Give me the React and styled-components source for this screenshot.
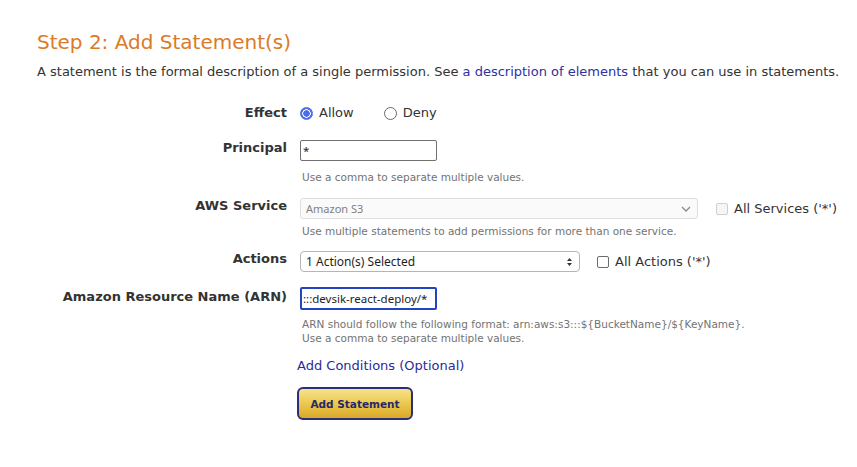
import React from 'react'
import styled, { createGlobalStyle } from 'styled-components'

const GlobalStyle = createGlobalStyle`
  html, body {
    margin: 0;
    padding: 0;
    background: #ffffff;
  }
  body {
    font-family: "DejaVu Sans", Verdana, sans-serif;
    color: #333333;
  }
`;

const App = () => {
  return (
    <>
      <GlobalStyle />
      <Page>
        <Title>Step 2: Add Statement(s)</Title>
        <Intro>
          A statement is the formal description of a single permission. See{' '}
          <InlineLink href="#">a description of elements</InlineLink> that you can use in statements.
        </Intro>

        <Form>
          <Row $top={25}>
            <Label>Effect</Label>
            <Field>
              <RadioGroup>
                <RadioLabel>
                  <Radio type="radio" name="effect" defaultChecked />
                  Allow
                </RadioLabel>
                <RadioLabel>
                  <Radio type="radio" name="effect" />
                  Deny
                </RadioLabel>
              </RadioGroup>
            </Field>
          </Row>

          <Row $top={19}>
            <Label>Principal</Label>
            <Field>
              <TextInput defaultValue="*" />
              <Help $top={9}>Use a comma to separate multiple values.</Help>
            </Field>
          </Row>

          <Row $top={14}>
            <Label>AWS Service</Label>
            <Field>
              <Inline $gap={18}>
                <SelectWrap $width={398}>
                  <Select disabled $disabled>
                    <option>Amazon S3</option>
                  </Select>
                  <Chevron width="10" height="6" viewBox="0 0 10 6">
                    <path d="M1 1l4 4 4-4" fill="none" stroke="#8a8a8a" strokeWidth="1.3" />
                  </Chevron>
                </SelectWrap>
                <CheckLabel $disabled>
                  <Checkbox type="checkbox" disabled $disabled />
                  All Services ('*')
                </CheckLabel>
              </Inline>
              <Help $top={5}>Use multiple statements to add permissions for more than one service.</Help>
            </Field>
          </Row>

          <Row $top={13}>
            <Label>Actions</Label>
            <Field>
              <Inline $gap={17}>
                <SelectWrap $width={280}>
                  <Select>
                    <option>1 Action(s) Selected</option>
                  </Select>
                  <Chevron width="7" height="10" viewBox="0 0 7 10">
                    <path d="M1 4l2.5-3 2.5 3z M1 6l2.5 3 2.5-3z" fill="#333" />
                  </Chevron>
                </SelectWrap>
                <CheckLabel>
                  <Checkbox type="checkbox" />
                  All Actions ('*')
                </CheckLabel>
              </Inline>
            </Field>
          </Row>

          <Row $top={15}>
            <Label $offset={2}>Amazon Resource Name (ARN)</Label>
            <Field>
              <TextInput $focused defaultValue=":::devsik-react-deploy/*" />
              <Help $top={7}>
                ARN should follow the following format: arn:aws:s3:::${'{'}BucketName{'}'}/${'{'}KeyName{'}'}.
                <br />
                Use a comma to separate multiple values.
              </Help>
            </Field>
          </Row>

          <Row $top={13}>
            <span />
            <Field>
              <ConditionsLink href="#">Add Conditions (Optional)</ConditionsLink>
              <AddButton type="button">Add Statement</AddButton>
            </Field>
          </Row>
        </Form>
      </Page>
    </>
  )
}

export default App

const Page = styled.div`
  padding: 28px 0 40px 37px;
  width: 857px;
  box-sizing: border-box;
`;

const Title = styled.h2`
  margin: 0;
  font-weight: normal;
  font-size: 20px;
  line-height: 28px;
  color: #dc7a26;
`;

const Intro = styled.p`
  margin: 8px 0 0;
  font-size: 13px;
  line-height: 16px;
  color: #333333;
  white-space: nowrap;
`;

const InlineLink = styled.a`
  color: #2f2fa3;
  text-decoration: none;
`;

const Form = styled.div`
  display: flex;
  flex-direction: column;
`;

const Row = styled.div`
  display: grid;
  grid-template-columns: 250px 1fr;
  column-gap: 13px;
  align-items: start;
  margin-top: ${(p) => p.$top || 0}px;
`;

const Label = styled.div`
  text-align: right;
  font-weight: bold;
  font-size: 13px;
  line-height: 16px;
  color: #333333;
  padding-top: ${(p) => p.$offset || 0}px;
  white-space: nowrap;
`;

const Field = styled.div`
  display: flex;
  flex-direction: column;
  align-items: flex-start;
`;

const RadioGroup = styled.div`
  display: flex;
  gap: 30px;
`;

const RadioLabel = styled.label`
  display: flex;
  align-items: center;
  gap: 6px;
  font-size: 13px;
  line-height: 16px;
  color: #333333;
`;

const Radio = styled.input`
  appearance: none;
  margin: 0;
  width: 13px;
  height: 13px;
  border-radius: 50%;
  border: 1px solid #6b6b6b;
  background: #ffffff;
  box-sizing: border-box;

  &:checked {
    border: 1px solid #4b6cf0;
    background: radial-gradient(circle, #4b6cf0 0 3px, #ffffff 3.5px 4px, #4b6cf0 4.5px);
  }
`;

const TextInput = styled.input`
  width: 137px;
  height: ${(p) => (p.$focused ? 23 : 21)}px;
  box-sizing: border-box;
  margin: 0;
  padding: 0 ${(p) => (p.$focused ? 1 : 2)}px;
  border: ${(p) => (p.$focused ? '2px solid #2443c0' : '1px solid #707070')};
  border-radius: 2px;
  font-family: "Noto Sans", "DejaVu Sans", sans-serif;
  font-size: 11.5px;
  color: #222222;
  outline: none;
  background: #ffffff;
`;

const Help = styled.div`
  margin-top: ${(p) => p.$top || 0}px;
  margin-left: 2px;
  font-size: 10.5px;
  line-height: 14px;
  color: #737373;
  white-space: nowrap;
`;

const Inline = styled.div`
  display: flex;
  align-items: center;
  gap: ${(p) => p.$gap || 12}px;
`;

const SelectWrap = styled.div`
  position: relative;
  width: ${(p) => p.$width}px;
`;

const Select = styled.select`
  appearance: none;
  width: 100%;
  height: 21px;
  margin: 0;
  padding: 0 20px 0 5px;
  box-sizing: border-box;
  border: 1px solid ${(p) => (p.$disabled ? '#dedede' : '#b5b5b5')};
  border-radius: ${(p) => (p.$disabled ? 3 : 4)}px;
  background: ${(p) => (p.$disabled ? '#fafafa' : '#ffffff')};
  color: ${(p) => (p.$disabled ? '#808080' : '#1e1e1e')};
  font-family: "Noto Sans", "DejaVu Sans", sans-serif;
  font-size: ${(p) => (p.$disabled ? 11 : 12)}px;
  opacity: 1;
  outline: none;
`;

const Chevron = styled.svg`
  position: absolute;
  right: 7px;
  top: 50%;
  transform: translateY(-50%);
  pointer-events: none;
`;

const CheckLabel = styled.label`
  display: flex;
  align-items: center;
  gap: 6px;
  font-size: 13px;
  line-height: 16px;
  color: #333333;
  white-space: nowrap;
`;

const Checkbox = styled.input`
  appearance: none;
  margin: 0;
  width: 12px;
  height: 12px;
  box-sizing: border-box;
  border: 1px solid ${(p) => (p.$disabled ? '#cfcfcf' : '#6b6b6b')};
  background: ${(p) => (p.$disabled ? '#f6f6f6' : '#ffffff')};
  border-radius: 2px;
`;

const ConditionsLink = styled.a`
  margin-left: -3px;
  font-size: 13px;
  line-height: 16px;
  color: #2a2a9c;
  text-decoration: none;
`;

const AddButton = styled.button`
  margin: 13px 0 0 -3px;
  width: 116px;
  height: 33px;
  box-sizing: border-box;
  border: 2px solid #2c2f78;
  border-radius: 6px;
  background: linear-gradient(to bottom, #f7e38c 0%, #ecc84e 50%, #d8a92a 100%);
  color: #25296b;
  font-family: "DejaVu Sans", Verdana, sans-serif;
  font-weight: bold;
  font-size: 10.5px;
  cursor: pointer;
  padding: 0;
`;
